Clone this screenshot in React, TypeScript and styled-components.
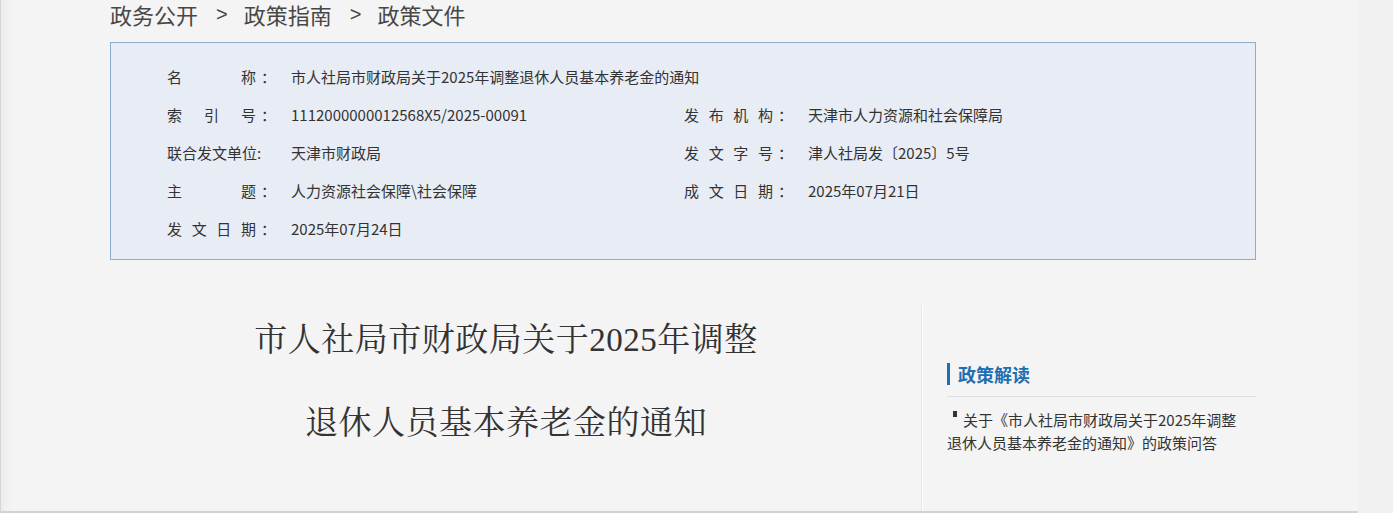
import React from 'react';
import styled, { createGlobalStyle } from 'styled-components';

const GlobalStyle = createGlobalStyle`
  html, body {
    margin: 0;
    padding: 0;
    background: #f0f0f0;
  }
  body {
    font-family: "Noto Sans CJK SC", "Liberation Sans", sans-serif;
    color: #333;
  }
`;

const Page = styled.div`
  box-sizing: border-box;
  width: 1358px;
  height: 513px;
  overflow: hidden;
  background: #f4f4f4;
  border-left: 1px solid #d6d6d6;
  border-bottom: 2px solid #d2d2d2;
  box-shadow: inset 12px 0 10px -8px rgba(0, 0, 0, 0.04);
  padding-left: 109px;
`;

const Inner = styled.div`
  width: 1146px;
`;

const Crumbs = styled.div`
  display: flex;
  align-items: center;
  height: 28px;
  font-size: 22px;
  line-height: 28px;
  color: #474747;

  span.sep {
    font-family: "Liberation Sans", sans-serif;
    font-size: 20px;
    margin: 0 16px 0 18px;
  }
`;

const InfoBox = styled.div`
  margin-top: 14px;
  box-sizing: border-box;
  width: 1146px;
  height: 218px;
  border: 1px solid #8eadcb;
  background: #e8ecf4;
  padding: 14px 0 0 56px;
  display: grid;
  grid-template-columns: 517px 1fr;
  grid-auto-rows: 38px;
  font-size: 15px;
`;

const Field = styled.div<{ $wide?: boolean }>`
  display: flex;
  align-items: center;
  grid-column: ${(p) => (p.$wide ? '1 / span 2' : 'auto')};
  white-space: nowrap;
`;

const Label = styled.span`
  display: flex;
  width: 124px;
  flex: none;

  b {
    font-weight: normal;
    width: 89px;
    text-align: justify;
    text-align-last: justify;
  }
`;

const Colon = styled.i<{ $full?: boolean }>`
  font-style: normal;
  margin-left: ${(p) => (p.$full ? '5px' : '1px')};
`;

const Value = styled.span`
  color: #333;
`;

const Main = styled.div`
  display: flex;
  margin-top: 45px;
`;

const Article = styled.div`
  width: 812px;
  flex: none;
  padding-top: 5px;
  display: flex;
  flex-direction: column;
  align-items: center;
  gap: 23px;
  padding-right: 20px;
  box-sizing: border-box;
`;

const TitleLine = styled.div`
  font-family: "Liberation Serif", "Noto Serif CJK SC", "Noto Sans CJK SC", serif;
  font-size: 33px;
  line-height: 60px;
  color: #333;
  letter-spacing: 0.5px;
`;

const Aside = styled.div`
  flex: 1;
  height: 220px;
  border-left: 1px solid #fdfdfd;
  box-shadow: -1px 0 0 #e9e9e9;
  padding-left: 24px;
`;

const AsideHead = styled.div`
  margin-top: 58px;
  padding-bottom: 11px;
  border-bottom: 1px solid #dedede;
  width: 309px;

  h3 {
    margin: 0;
    font-size: 18px;
    line-height: 22px;
    font-weight: bold;
    color: #1d6fb3;
    border-left: 3px solid #1d6fb3;
    padding-left: 8px;
  }
`;

const Item = styled.div`
  width: 296px;
  margin-top: 11px;
  font-size: 15px;
  line-height: 23px;
  color: #333;

  &::before {
    content: '';
    display: inline-block;
    width: 4px;
    height: 6px;
    background: #333;
    margin: 0 6px 0 6px;
    vertical-align: 9px;
  }
`;

const rows: [string, string, string?, string?][] = [
  ['名称', '市人社局市财政局关于2025年调整退休人员基本养老金的通知'],
  ['索引号', '1112000000012568X5/2025-00091', '发布机构', '天津市人力资源和社会保障局'],
  ['联合发文单位', '天津市财政局', '发文字号', '津人社局发〔2025〕5号'],
  ['主题', '人力资源社会保障\\社会保障', '成文日期', '2025年07月21日'],
  ['发文日期', '2025年07月24日'],
];

function LabelCell({ text }: { text: string }) {
  const packed = text.length >= 6;
  return (
    <Label>
      <b>{text}</b>
      <Colon $full={!packed}>{packed ? ':' : '：'}</Colon>
    </Label>
  );
}

export default function App() {
  return (
    <>
      <GlobalStyle />
      <Page>
        <Inner>
          <Crumbs>
            政务公开<span className="sep">&gt;</span>政策指南<span className="sep">&gt;</span>政策文件
          </Crumbs>
          <InfoBox>
            {rows.map(([l1, v1, l2, v2], i) =>
              l2 ? (
                <React.Fragment key={i}>
                  <Field>
                    <LabelCell text={l1} />
                    <Value>{v1}</Value>
                  </Field>
                  <Field>
                    <LabelCell text={l2} />
                    <Value>{v2}</Value>
                  </Field>
                </React.Fragment>
              ) : (
                <Field key={i} $wide>
                  <LabelCell text={l1} />
                  <Value>{v1}</Value>
                </Field>
              )
            )}
          </InfoBox>
          <Main>
            <Article>
              <TitleLine>市人社局市财政局关于2025年调整</TitleLine>
              <TitleLine>退休人员基本养老金的通知</TitleLine>
            </Article>
            <Aside>
              <AsideHead>
                <h3>政策解读</h3>
              </AsideHead>
              <Item>关于《市人社局市财政局关于2025年调整退休人员基本养老金的通知》的政策问答</Item>
            </Aside>
          </Main>
        </Inner>
      </Page>
    </>
  );
}
